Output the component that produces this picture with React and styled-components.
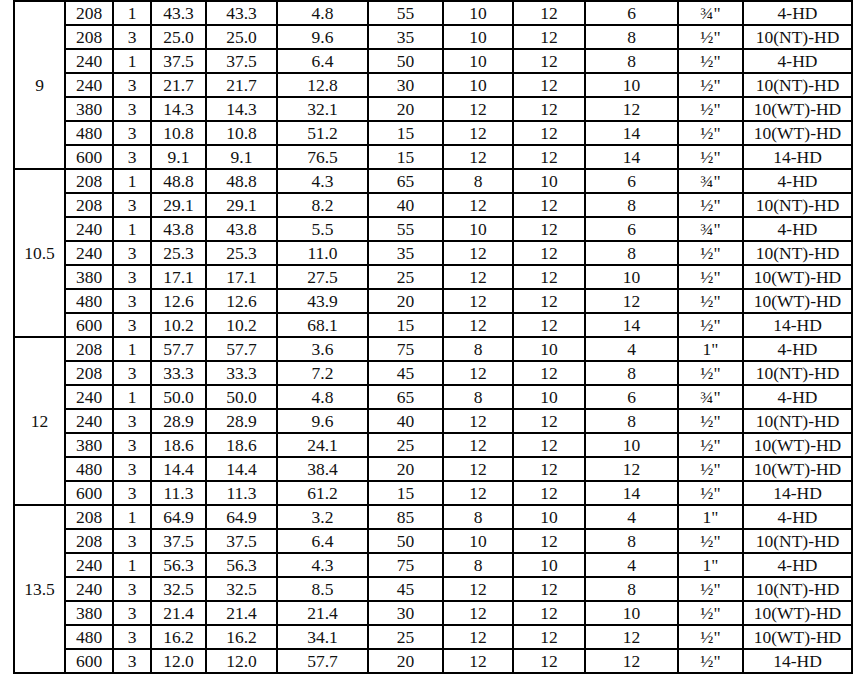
import React from "react";
import styled, { createGlobalStyle } from "styled-components";

const GlobalStyle = createGlobalStyle`
  html, body {
    margin: 0;
    padding: 0;
    background: #fff;
  }
  body {
    font-family: "Liberation Serif", "Times New Roman", serif;
    color: #111;
  }
`;

const Page = styled.div`
  padding: 0 0 0 13px;
`;

const Table = styled.table`
  border-collapse: collapse;
  table-layout: fixed;
  width: 840px;
  font-size: 17.5px;
`;

const Cell = styled.td`
  border: 2px solid #000;
  padding: 0;
  height: 22px;
  line-height: 20px;
  text-align: center;
  vertical-align: middle;
  white-space: nowrap;
  overflow: hidden;
`;

const GroupCell = styled(Cell)`
  vertical-align: middle;
`;

const widths = [51, 48, 38, 55, 71, 91, 75, 70, 72, 93, 65, 109];

const groups = [
  {
    label: "9",
    rows: [
      ["208", "1", "43.3", "43.3", "4.8", "55", "10", "12", "6", "¾\"", "4-HD"],
      ["208", "3", "25.0", "25.0", "9.6", "35", "10", "12", "8", "½\"", "10(NT)-HD"],
      ["240", "1", "37.5", "37.5", "6.4", "50", "10", "12", "8", "½\"", "4-HD"],
      ["240", "3", "21.7", "21.7", "12.8", "30", "10", "12", "10", "½\"", "10(NT)-HD"],
      ["380", "3", "14.3", "14.3", "32.1", "20", "12", "12", "12", "½\"", "10(WT)-HD"],
      ["480", "3", "10.8", "10.8", "51.2", "15", "12", "12", "14", "½\"", "10(WT)-HD"],
      ["600", "3", "9.1", "9.1", "76.5", "15", "12", "12", "14", "½\"", "14-HD"],
    ],
  },
  {
    label: "10.5",
    rows: [
      ["208", "1", "48.8", "48.8", "4.3", "65", "8", "10", "6", "¾\"", "4-HD"],
      ["208", "3", "29.1", "29.1", "8.2", "40", "12", "12", "8", "½\"", "10(NT)-HD"],
      ["240", "1", "43.8", "43.8", "5.5", "55", "10", "12", "6", "¾\"", "4-HD"],
      ["240", "3", "25.3", "25.3", "11.0", "35", "12", "12", "8", "½\"", "10(NT)-HD"],
      ["380", "3", "17.1", "17.1", "27.5", "25", "12", "12", "10", "½\"", "10(WT)-HD"],
      ["480", "3", "12.6", "12.6", "43.9", "20", "12", "12", "12", "½\"", "10(WT)-HD"],
      ["600", "3", "10.2", "10.2", "68.1", "15", "12", "12", "14", "½\"", "14-HD"],
    ],
  },
  {
    label: "12",
    rows: [
      ["208", "1", "57.7", "57.7", "3.6", "75", "8", "10", "4", "1\"", "4-HD"],
      ["208", "3", "33.3", "33.3", "7.2", "45", "12", "12", "8", "½\"", "10(NT)-HD"],
      ["240", "1", "50.0", "50.0", "4.8", "65", "8", "10", "6", "¾\"", "4-HD"],
      ["240", "3", "28.9", "28.9", "9.6", "40", "12", "12", "8", "½\"", "10(NT)-HD"],
      ["380", "3", "18.6", "18.6", "24.1", "25", "12", "12", "10", "½\"", "10(WT)-HD"],
      ["480", "3", "14.4", "14.4", "38.4", "20", "12", "12", "12", "½\"", "10(WT)-HD"],
      ["600", "3", "11.3", "11.3", "61.2", "15", "12", "12", "14", "½\"", "14-HD"],
    ],
  },
  {
    label: "13.5",
    rows: [
      ["208", "1", "64.9", "64.9", "3.2", "85", "8", "10", "4", "1\"", "4-HD"],
      ["208", "3", "37.5", "37.5", "6.4", "50", "10", "12", "8", "½\"", "10(NT)-HD"],
      ["240", "1", "56.3", "56.3", "4.3", "75", "8", "10", "4", "1\"", "4-HD"],
      ["240", "3", "32.5", "32.5", "8.5", "45", "12", "12", "8", "½\"", "10(NT)-HD"],
      ["380", "3", "21.4", "21.4", "21.4", "30", "12", "12", "10", "½\"", "10(WT)-HD"],
      ["480", "3", "16.2", "16.2", "34.1", "25", "12", "12", "12", "½\"", "10(WT)-HD"],
      ["600", "3", "12.0", "12.0", "57.7", "20", "12", "12", "12", "½\"", "14-HD"],
    ],
  },
];

export default function App() {
  return (
    <Page>
      <GlobalStyle />
      <Table>
        <colgroup>
          {widths.map((w, i) => (
            <col key={i} style={{ width: w }} />
          ))}
        </colgroup>
        <tbody>
          {groups.map((g) =>
            g.rows.map((row, ri) => (
              <tr key={g.label + "-" + ri}>
                {ri === 0 && (
                  <GroupCell rowSpan={g.rows.length}>{g.label}</GroupCell>
                )}
                {row.map((v, ci) => (
                  <Cell key={ci}>{v}</Cell>
                ))}
              </tr>
            ))
          )}
        </tbody>
      </Table>
    </Page>
  );
}
